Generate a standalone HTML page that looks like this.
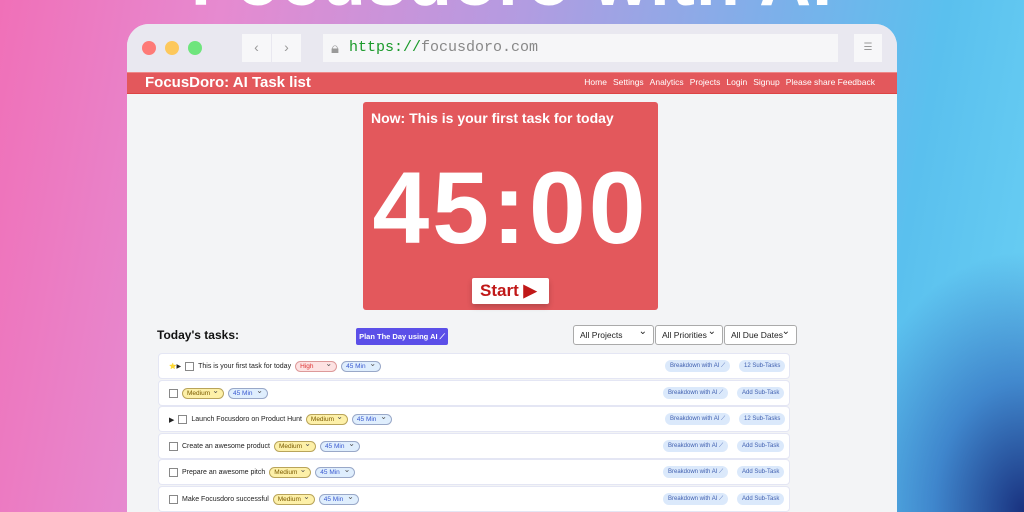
<!DOCTYPE html><html><head><style>
*{box-sizing:border-box;margin:0;padding:0}
html,body{width:1024px;height:512px;overflow:hidden}
body{position:relative;font-family:"Liberation Sans",sans-serif;
background:radial-gradient(ellipse 180px 260px at 100% 100%,rgba(20,40,120,.95) 0%,rgba(40,90,180,.6) 50%,rgba(90,180,240,0) 100%),linear-gradient(100deg,#f070b8 0%,#e68ad0 20%,#b79ae0 45%,#7cb0ea 70%,#5ac0ee 85%,#6ad0f4 100%);}
.title{position:absolute;left:0;width:1024px;text-align:center;top:-60px;font-size:72px;font-weight:bold;color:#fff;letter-spacing:1px}
.win{position:absolute;left:127px;top:24px;width:770px;height:488px;border-radius:22px 22px 0 0;overflow:hidden;background:#f3f4f6}
.chrome{height:48px;background:#e9e8f0;position:relative}
.dot{position:absolute;top:17px;width:14px;height:14px;border-radius:50%}
.navb{position:absolute;top:10px;height:28px;background:#f7f7f9;width:29px;color:#999;font-size:14px;text-align:center;line-height:27px}
.url{position:absolute;left:196px;top:10px;width:515px;height:28px;background:#f6f6f8;font-family:"Liberation Mono",monospace;font-size:15px;line-height:28px;padding-left:26px;color:#888}
.nav{height:22px;background:#e3585c;color:#fff;position:relative;border-top:1px solid #e88;border-bottom:1px solid #d44}
.nav b{position:absolute;left:18px;top:1px;font-size:15px}
.nav .links{position:absolute;right:22px;top:4px;font-size:8.5px}
.nav .links span{margin-left:6px}
.timer{position:absolute;left:236px;top:78px;width:295px;height:208px;background:#e3585c;border-radius:3px;color:#fff}
.timer .now{position:absolute;left:8px;top:8px;font-size:14px;font-weight:bold}
.timer .big{position:absolute;left:0;width:100%;text-align:center;top:48px;font-size:102px;font-weight:bold;letter-spacing:3px}
.start{position:absolute;left:109px;top:176px;width:77px;height:26px;background:#fff;color:#c01818;font-weight:bold;font-size:17px;line-height:26px;padding-left:8px;border-radius:2px;box-shadow:0 3px 6px rgba(0,0,0,.2)}
.tt{position:absolute;left:30px;top:304px;font-size:12px;font-weight:bold;color:#111}
.plan{position:absolute;left:229px;top:304px;width:92px;height:17px;background:#5b4fe8;color:#fff;font-size:7.5px;font-weight:bold;border-radius:2px;line-height:17px;text-align:center}
.sel{position:absolute;top:301px;height:20px;border:1px solid #aaa;border-radius:3px;background:#fff;font-size:8.5px;line-height:18px;padding-left:6px;color:#222}
.sel:after{content:"⌄";position:absolute;right:6px;top:-3px;font-size:10px}
.row{position:absolute;left:32px;width:630px;height:24px;background:#fff;border-radius:3px;box-shadow:0 0 0 1px #e4e6f4;font-size:7px;color:#222}
.row .in{position:absolute;left:10px;top:7px;display:flex;align-items:center;gap:4px;white-space:nowrap}
.cb{width:9px;height:9px;border:1px solid #888;display:inline-block;background:#fff}
.pill{display:inline-block;height:11px;border-radius:6px;font-size:6.5px;line-height:9px;padding:0 4px;position:relative}
.hi{background:#fde2e2;border:1px solid #d99;color:#d33;width:42px}
.md{background:#fdf0a8;border:1px solid #b9a45a;color:#7a5a00;width:42px}
.mn{background:#dfeefd;border:1px solid #99a8c8;color:#3a5ad0;width:40px}
.pill:after{content:"⌄";position:absolute;right:4px;top:-3px;font-size:8px;color:#555}
.r1,.r2{position:absolute;top:6px;height:12px;border-radius:6px;background:#dbe9fb;color:#4060b0;font-size:6px;line-height:12px;padding:0 5px}
</style></head><body>
<div class="title">Focusdoro with AI</div>
<div class="win">
 <div class="chrome">
  <div class="dot" style="left:15px;background:#fe7a77"></div>
  <div class="dot" style="left:38px;background:#fdc85c"></div>
  <div class="dot" style="left:61px;background:#6fe57d"></div>
  <div class="navb" style="left:115px">‹</div><div class="navb" style="left:145px">›</div>
  <div class="url"><span style="position:absolute;left:8px;top:0;color:#999;font-family:'DejaVu Sans'">🔒︎</span><span style="color:#1a9a2a">https://</span>focusdoro.com</div>
  <div class="navb" style="left:727px;width:28px;font-size:10px">☰</div>
 </div>
 <div class="nav"><b>FocusDoro: AI Task list</b><div class="links"><span>Home</span><span>Settings</span><span>Analytics</span><span>Projects</span><span>Login</span><span>Signup</span><span>Please share Feedback</span></div></div>
 <div class="timer"><div class="now">Now: This is your first task for today</div><div class="big">45:00</div><div class="start">Start ▶</div></div>
 <div class="tt">Today's tasks:</div>
 <div class="plan">Plan The Day using AI ⟋</div>
 <div class="sel" style="left:446px;width:81px">All Projects</div>
 <div class="sel" style="left:528px;width:68px">All Priorities</div>
 <div class="sel" style="left:597px;width:73px">All Due Dates</div>

 <div class="row" style="top:330px"><div class="in"><span style="font-size:6px">⭐▶</span><span class="cb"></span><span>This is your first task for today</span><span class="pill hi">High</span><span class="pill mn">45 Min</span></div><span class="r1" style="left:506px">Breakdown with AI ⟋</span><span class="r2" style="left:580px">12 Sub-Tasks</span></div>
 <div class="row" style="top:357px"><div class="in"><span class="cb"></span><span class="pill md">Medium</span><span class="pill mn">45 Min</span></div><span class="r1" style="left:504px">Breakdown with AI ⟋</span><span class="r2" style="left:578px">Add Sub-Task</span></div>
 <div class="row" style="top:383px"><div class="in"><span>▶</span><span class="cb"></span><span>Launch Focusdoro on Product Hunt</span><span class="pill md">Medium</span><span class="pill mn">45 Min</span></div><span class="r1" style="left:506px">Breakdown with AI ⟋</span><span class="r2" style="left:580px">12 Sub-Tasks</span></div>
 <div class="row" style="top:410px"><div class="in"><span class="cb"></span><span>Create an awesome product</span><span class="pill md">Medium</span><span class="pill mn">45 Min</span></div><span class="r1" style="left:504px">Breakdown with AI ⟋</span><span class="r2" style="left:578px">Add Sub-Task</span></div>
 <div class="row" style="top:436px"><div class="in"><span class="cb"></span><span>Prepare an awesome pitch</span><span class="pill md">Medium</span><span class="pill mn">45 Min</span></div><span class="r1" style="left:504px">Breakdown with AI ⟋</span><span class="r2" style="left:578px">Add Sub-Task</span></div>
 <div class="row" style="top:463px"><div class="in"><span class="cb"></span><span>Make Focusdoro successful</span><span class="pill md">Medium</span><span class="pill mn">45 Min</span></div><span class="r1" style="left:504px">Breakdown with AI ⟋</span><span class="r2" style="left:578px">Add Sub-Task</span></div>
</div>
</body></html>
